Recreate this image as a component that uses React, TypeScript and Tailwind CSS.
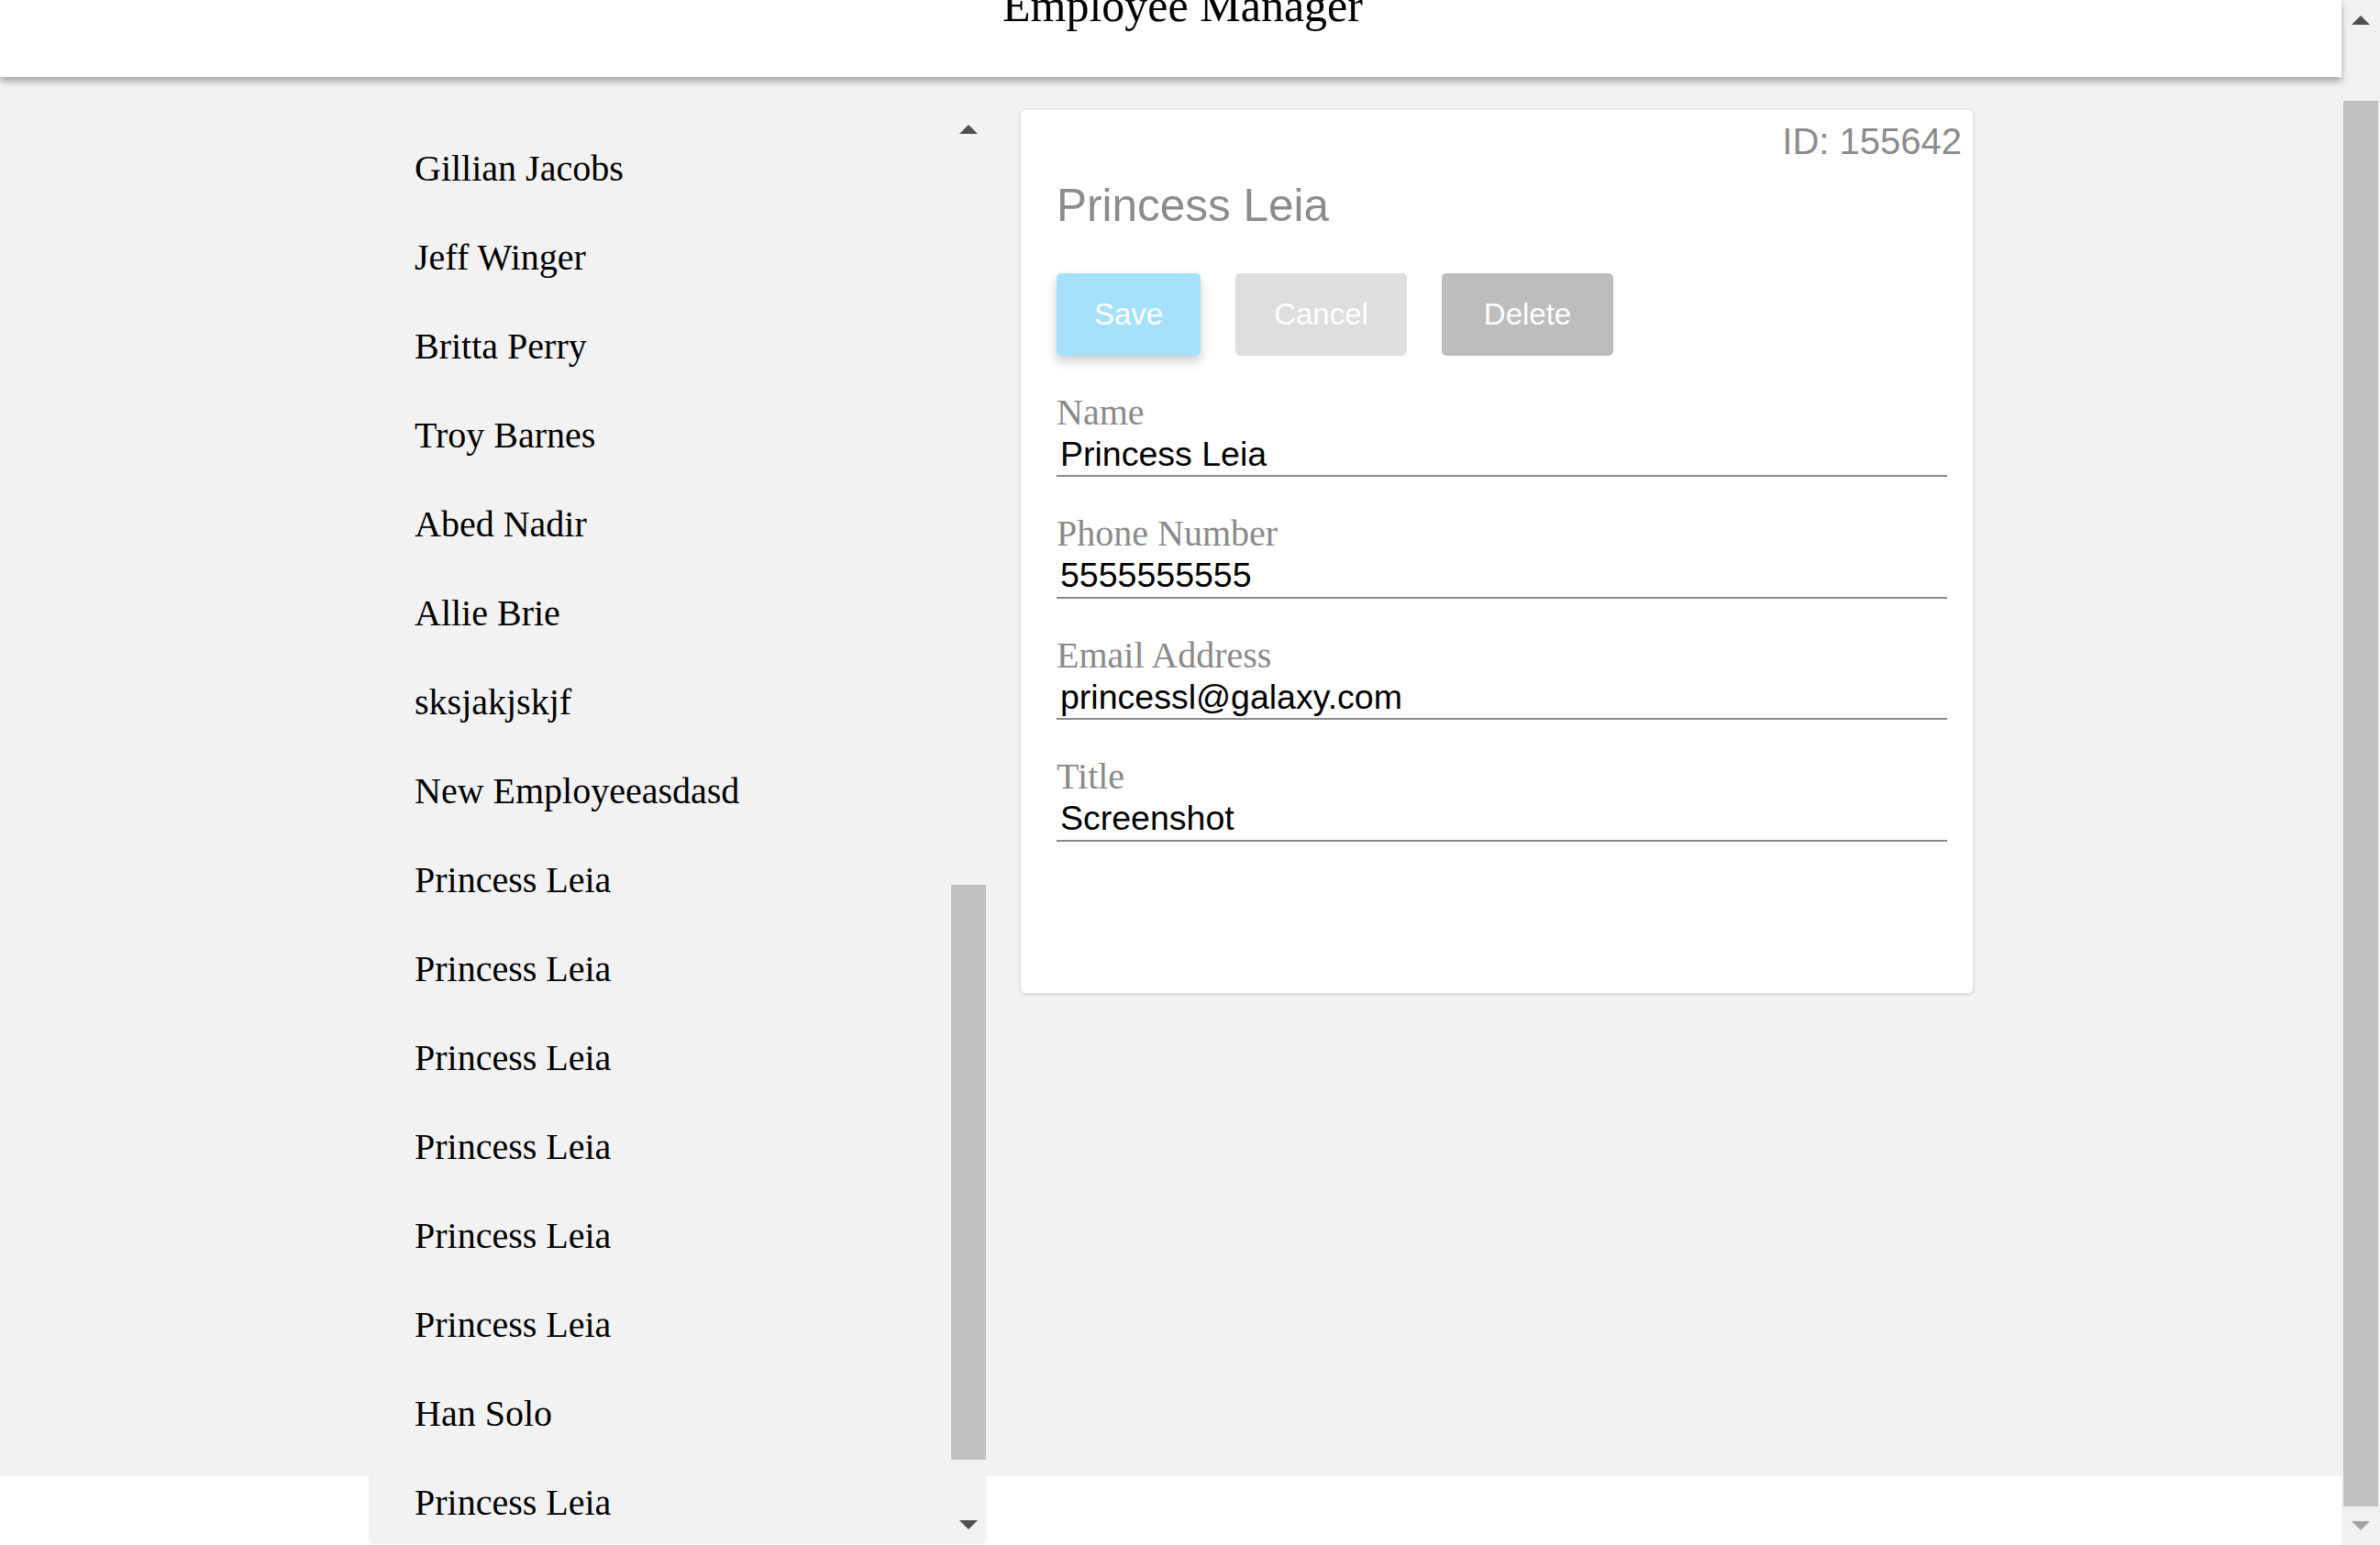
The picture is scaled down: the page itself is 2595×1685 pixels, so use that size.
import React from 'react';

// Employee Manager - list + detail view

const employees = [
  'Gillian Jacobs',
  'Jeff Winger',
  'Britta Perry',
  'Troy Barnes',
  'Abed Nadir',
  'Allie Brie',
  'sksjakjskjf',
  'New Employeeasdasd',
  'Princess Leia',
  'Princess Leia',
  'Princess Leia',
  'Princess Leia',
  'Princess Leia',
  'Princess Leia',
  'Han Solo',
  'Princess Leia',
];

const fields = [
  { label: 'Name', value: 'Princess Leia' },
  { label: 'Phone Number', value: '5555555555' },
  { label: 'Email Address', value: 'princessl@galaxy.com' },
  { label: 'Title', value: 'Screenshot' },
];

const serif = "font-['Liberation_Serif','Times_New_Roman',serif]";
const sans = "font-['Liberation_Sans',Arial,sans-serif]";

function Arrow({ down = false, color }: { down?: boolean; color: string }) {
  return (
    <svg width="20" height="10" viewBox="0 0 20 10" fill={color}>
      {down ? <polygon points="0,0 20,0 10,10" /> : <polygon points="10,0 20,10 0,10" />}
    </svg>
  );
}

function EmployeeList() {
  return (
    <div className="ml-[402px] mt-[36px] w-[674px] h-[1564px] shrink-0 bg-[#f2f2f2] rounded-b-md overflow-hidden flex">
      <ul className={`flex-1 pl-[50px] pt-[15px] ${serif} text-[40px] leading-[97px] text-black`}>
        {employees.map((name, i) => (
          <li key={i} className="h-[97px] whitespace-nowrap">
            {name}
          </li>
        ))}
      </ul>
      {/* list scrollbar */}
      <div className="w-[40px] flex flex-col">
        <div className="h-[42px] flex items-center justify-center">
          <Arrow color="#505050" />
        </div>
        <div className="flex-1 px-[1px]">
          <div className="mt-[803px] h-[627px] bg-[#c1c1c1]" />
        </div>
        <div className="h-[42px] flex items-center justify-center">
          <Arrow down color="#505050" />
        </div>
      </div>
    </div>
  );
}

function EmployeeCard() {
  return (
    <div className="ml-[37px] mt-[36px] w-[1038px] h-[963px] shrink-0 bg-white rounded-[5px] shadow-[0_1px_4px_rgba(0,0,0,0.18)] pl-[39px] pr-[28px] pt-[14px]">
      <div className={`-mr-[16px] text-right ${sans} text-[40px] leading-none text-[#8c8c8c]`}>ID: 155642</div>
      <h2 className={`mt-[25px] ${sans} text-[49.5px] leading-none text-[#8c8c8c]`}>Princess Leia</h2>

      <div className={`mt-[49px] flex gap-[38px] ${sans} text-[33px] text-white`}>
        <button className="w-[157px] h-[90px] rounded-[5px] bg-[#a6e1fc] shadow-[0_6px_12px_rgba(0,0,0,0.2)]">Save</button>
        <button className="w-[187px] h-[90px] rounded-[5px] bg-[#dedede]">Cancel</button>
        <button className="w-[187px] h-[90px] rounded-[5px] bg-[#bdbdbd]">Delete</button>
      </div>

      <div className="mt-[42px] flex flex-col gap-[42px]">
        {fields.map((f) => (
          <div key={f.label}>
            <div className={`${serif} text-[40px] leading-none text-[#8a8a8a]`}>{f.label}</div>
            <div className="mt-[7px] pl-[4px] pb-[4px] border-b-2 border-[#8a8a8a]">
              <span className={`${sans} text-[37.5px] leading-none text-black block`}>{f.value}</span>
            </div>
          </div>
        ))}
      </div>
    </div>
  );
}

export default function App() {
  return (
    <div className="h-[1685px] flex overflow-hidden bg-white">
      <div className="flex-1 flex flex-col min-w-0">
        <header className="relative z-10 h-[84px] shrink-0 bg-white shadow-[0_5px_7px_rgba(0,0,0,0.3)] overflow-hidden">
          <h1 className={`-mt-[19px] pl-[26px] text-center ${serif} text-[50px] leading-none text-black`}>
            Employee Manager
          </h1>
        </header>
        <main className="h-[1526px] shrink-0 bg-[#f2f2f2] flex items-start">
          <EmployeeList />
          <EmployeeCard />
        </main>
      </div>

      {/* page scrollbar */}
      <div className="w-[42px] shrink-0 bg-[#f1f1f1] flex flex-col">
        <div className="h-[44px] flex items-center justify-center">
          <Arrow color="#505050" />
        </div>
        <div className="flex-1 px-[2px]">
          <div className="mt-[66px] h-[1533px] bg-[#c1c1c1]" />
        </div>
        <div className="h-[42px] flex items-center justify-center">
          <Arrow down color="#a3a3a3" />
        </div>
      </div>
    </div>
  );
}
